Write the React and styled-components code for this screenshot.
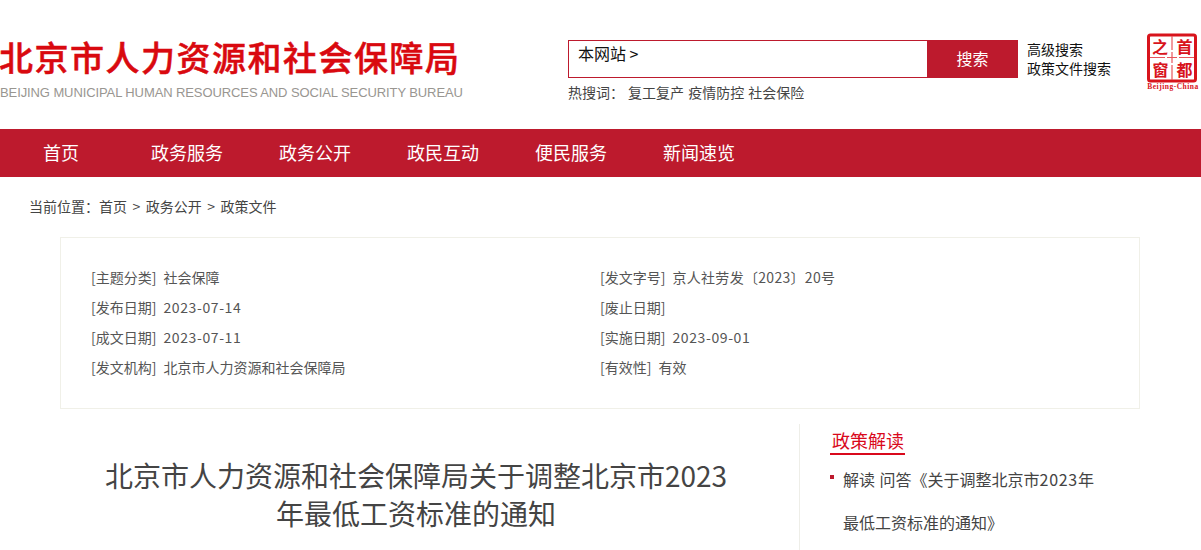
import React from "react";
import styled, { createGlobalStyle } from "styled-components";

const CJK = `"Noto Sans CJK SC", "Liberation Sans", sans-serif`;
const RED = "#bd1a2d";

const Global = createGlobalStyle`
  html, body { margin: 0; padding: 0; background: #fff; overflow: hidden; }
  body { font-family: "Liberation Sans", ${CJK}; }
  * { box-sizing: border-box; }
`;
const Page = styled.div`width: 1201px; height: 550px; overflow: hidden;`;
const Header = styled.header`height: 129px; position: relative; display: flex;`;
const Brand = styled.div`width: 568px; padding-top: 34px; flex: none;`;
const BrandTitle = styled.div`
  font-family: ${CJK}; font-weight: 500; font-size: 34px; line-height: 46px; color: #d9090f;
  letter-spacing: 1.5px; white-space: nowrap; margin-left: -1px; -webkit-text-stroke: 0.5px #d9090f;
`;
const BrandSub = styled.div`
  font-size: 13px; line-height: 18px; margin-top: 4px; color: #999691; white-space: nowrap; letter-spacing: -0.1px;
`;
const SearchCol = styled.div`width: 450px; padding-top: 40px; flex: none;`;
const SearchBox = styled.div`
  width: 450px; height: 38px; display: flex; border: 1px solid ${RED};
`;
const Scope = styled.div`
  flex: 1; font-size: 16px; color: #111; font-family: ${CJK}; padding-left: 9px; line-height: 24px;
`;
const SearchBtn = styled.div`
  width: 91px; margin: -1px; height: 38px; background: ${RED}; color: #fff; font-family: ${CJK}; font-size: 16px;
  display: flex; align-items: center; justify-content: center; padding-bottom: 2px;
`;
const Hot = styled.div`
  margin-top: 4px; font-family: ${CJK}; font-size: 14px; line-height: 20px; color: #444; display: flex; white-space: pre; word-spacing: 1px;
`;
const HotLabel = styled.span`width: 60px;`;
const Links = styled.div`
  margin-left: 9px; padding-top: 40px; font-family: ${CJK}; font-size: 14px; line-height: 19px; color: #111; white-space: nowrap;
`;
const Seal = styled.svg`position: absolute; left: 1145px; top: 33px;`;
const Nav = styled.nav`
  height: 48px; background: ${RED}; display: flex; gap: 56px; padding-left: 43px; align-items: center;
`;
const NavItem = styled.a`
  font-family: ${CJK}; font-size: 18px; color: #fff; line-height: 46px; padding-bottom: 2px; margin-right: ${p => p.$extra || 0}px;
`;
const Crumb = styled.div`
  padding: 20px 0 0 29px; height: 60px; font-family: ${CJK}; font-size: 14px; line-height: 18px; color: #444; white-space: nowrap;
`;
const CrumbSep = styled.span`margin: 0 5.5px;`;
const Info = styled.section`
  margin-left: 60px; width: 1080px; height: 172px; border: 1px solid #f0f0e8; padding: 24px 30px 0;
  display: grid; grid-template-columns: 509px 1fr; grid-auto-rows: 30px;
`;
const InfoRow = styled.div`
  font-family: ${CJK}; font-size: 14px; line-height: 30px; color: #555; display: flex; gap: 7px; white-space: nowrap;
`;
const InfoVal = styled.span`letter-spacing: ${p => p.$ls || 0}px;`;
const Body = styled.div`display: flex; margin-top: 15px; height: 126px;`;
const Article = styled.div`
  width: 739px; margin-left: 60px; padding: 32px 62px 0 35px; flex: none;
`;
const Title = styled.h1`
  margin: 0; font-family: ${CJK}; font-weight: 400; font-size: 28px; line-height: 38px; color: #444; text-align: center;
`;
const Side = styled.aside`
  flex: 1; border-left: 1px solid #eeeee8; padding: 4px 0 0 30px;
`;
const SideTitle = styled.div`
  display: inline-block; font-family: ${CJK}; font-size: 18px; line-height: 25px; color: #d9091c;
  padding: 0 1px 0 2px; height: 27px; border-bottom: 2px solid #d9091c;
`;
const SideItem = styled.div`
  position: relative; margin-top: 3px; padding-left: 13px; width: 273px; font-family: ${CJK}; font-size: 16px; line-height: 43px; color: #444; word-spacing: 1px;
  &::before { content: ""; position: absolute; left: 0; top: 17px; width: 4px; height: 4px; background: ${RED}; }
`;
const Digits = styled.span`letter-spacing: 0.7px;`;

const rows = [
  ["[主题分类]", "社会保障", "[发文字号]", "京人社劳发〔2023〕20号"],
  ["[发布日期]", "2023-07-14", "[废止日期]", ""],
  ["[成文日期]", "2023-07-11", "[实施日期]", "2023-09-01"],
  ["[发文机构]", "北京市人力资源和社会保障局", "[有效性]", "有效"],
];
const spacing = s => (/^\d{4}-/.test(s) ? 0.6 : /\d/.test(s) ? 0.3 : 0);

export default function App() {
  return (
    <Page>
      <Global />
      <Header>
        <Brand>
          <BrandTitle>北京市人力资源和社会保障局</BrandTitle>
          <BrandSub>BEIJING MUNICIPAL HUMAN RESOURCES AND SOCIAL SECURITY BUREAU</BrandSub>
        </Brand>
        <SearchCol>
          <SearchBox>
            <Scope>本网站 &gt;</Scope>
            <SearchBtn>搜索</SearchBtn>
          </SearchBox>
          <Hot><HotLabel>热搜词：</HotLabel>复工复产 疫情防控 社会保险</Hot>
        </SearchCol>
        <Links>高级搜索<br />政策文件搜索</Links>
        <Seal width="56" height="60" viewBox="0 0 56 60">
          <rect x="3.5" y="2" width="47" height="46" rx="2" fill="none" stroke="#d8141c" strokeWidth="3" />
          <path d="M5 24.5H20M22 24.5H32M34 24.5H49M27 3V17M27 19V30M27 32V47" stroke="#e8565c" strokeWidth="1.2" />
          <g fontFamily='"Noto Sans CJK SC", sans-serif' fontSize="16" fontWeight="700" fill="#d8141c" textAnchor="middle">
            <text x="39.5" y="20">首</text>
            <text x="39.5" y="43">都</text>
            <text x="15" y="20">之</text>
            <text x="15.5" y="43">窗</text>
          </g>
          <text x="28" y="56" fontFamily='"Liberation Serif", serif' fontSize="7.5" fontWeight="700" letterSpacing="0.5" fill="#d8141c" textAnchor="middle">Beijing-China</text>
        </Seal>
      </Header>
      <Nav>
        <NavItem $extra={16}>首页</NavItem>
        <NavItem>政务服务</NavItem>
        <NavItem>政务公开</NavItem>
        <NavItem>政民互动</NavItem>
        <NavItem>便民服务</NavItem>
        <NavItem>新闻速览</NavItem>
      </Nav>
      <Crumb>当前位置：首页<CrumbSep>&gt;</CrumbSep>政务公开<CrumbSep>&gt;</CrumbSep>政策文件</Crumb>
      <Info>
        {rows.map(r => (
          <React.Fragment key={r[0]}>
            <InfoRow><span>{r[0]}</span><InfoVal $ls={spacing(r[1])}>{r[1]}</InfoVal></InfoRow>
            <InfoRow><span>{r[2]}</span><InfoVal $ls={spacing(r[3])}>{r[3]}</InfoVal></InfoRow>
          </React.Fragment>
        ))}
      </Info>
      <Body>
        <Article>
          <Title>北京市人力资源和社会保障局关于调整北京市2023年最低工资标准的通知</Title>
        </Article>
        <Side>
          <SideTitle>政策解读</SideTitle>
          <SideItem>解读 问答《关于调整北京市<Digits>2023</Digits>年最低工资标准的通知》</SideItem>
        </Side>
      </Body>
    </Page>
  );
}
